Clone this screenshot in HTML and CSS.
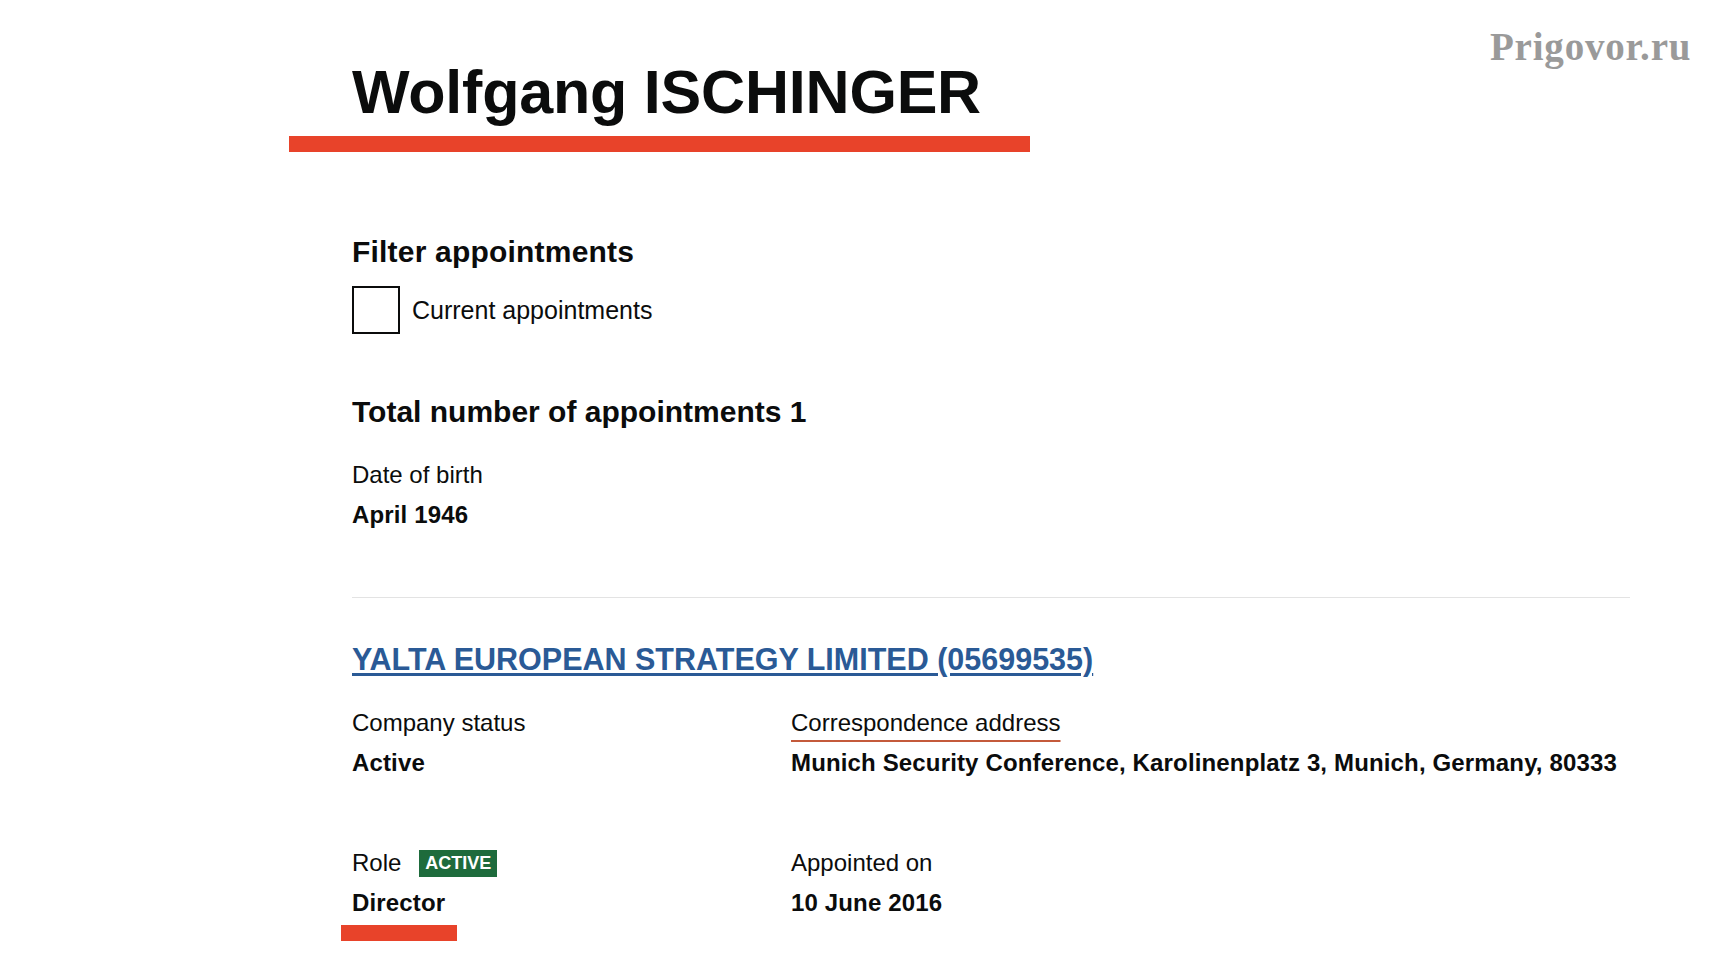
FILE: index.html
```html
<!DOCTYPE html>
<html lang="en">
<head>
<meta charset="utf-8">
<title>Wolfgang ISCHINGER</title>
<link rel="stylesheet" href="styles.css">
</head>
<body>
<div class="watermark">Prigovor.ru</div>
<header class="page-header">
  <h1 class="title">Wolfgang ISCHINGER</h1>
</header>
<main class="main">
  <h2 class="heading filter-heading">Filter appointments</h2>
  <label class="check">
    <span class="check-box"></span>
    <span class="check-label">Current appointments</span>
  </label>
  <h2 class="heading total-heading">Total number of appointments 1</h2>
  <div class="dob">
    <div class="label">Date of birth</div>
    <div class="value value-dob">April 1946</div>
  </div>
  <hr class="rule">
  <section class="appointment">
    <h2 class="heading link-heading"><a class="company-link" href="#">YALTA EUROPEAN STRATEGY LIMITED (05699535)</a></h2>
    <div class="grid">
      <div class="cell">
        <div class="label">Company status</div>
        <div class="value">Active</div>
      </div>
      <div class="cell">
        <div class="label"><span class="underlined">Correspondence address</span></div>
        <div class="value">Munich Security Conference, Karolinenplatz 3, Munich, Germany, 80333</div>
      </div>
      <div class="cell row2">
        <div class="label label-role">Role <span class="badge">ACTIVE</span></div>
        <div class="value">Director</div>
        <div class="marker"></div>
      </div>
      <div class="cell row2">
        <div class="label">Appointed on</div>
        <div class="value">10 June 2016</div>
      </div>
    </div>
  </section>
</main>
</body>
</html>
```
FILE: styles.css
```css
html, body {
  margin: 0;
  padding: 0;
  background: #ffffff;
}
body {
  font-family: "Liberation Sans", Arial, sans-serif;
  color: #0b0c0c;
  width: 1718px;
  height: 966px;
  overflow: hidden;
  position: relative;
}
.watermark {
  position: absolute;
  left: 1490px;
  top: 23px;
  font-family: "Liberation Serif", "Times New Roman", serif;
  font-weight: bold;
  font-size: 39px;
  line-height: 48px;
  color: #9a9a9a;
  letter-spacing: 0.8px;
}
.page-header {
  margin-left: 289px;
  width: 741px;
  padding-top: 56px;
  padding-bottom: 8px;
  border-bottom: 16px solid #e8432a;
}
.title {
  margin: 0 0 0 63px;
  font-size: 61px;
  line-height: 72px;
  font-weight: bold;
  letter-spacing: -0.2px;
}
.main {
  margin-left: 352px;
  width: 1278px;
}
.heading {
  margin: 0;
  font-size: 30px;
  line-height: 36px;
  font-weight: bold;
}
.filter-heading {
  padding-top: 82px;
  letter-spacing: 0.2px;
}
.check {
  display: flex;
  align-items: center;
  margin-top: 16px;
  height: 48px;
}
.check-box {
  width: 44px;
  height: 44px;
  border: 2px solid #0b0c0c;
  flex: none;
}
.check-label {
  margin-left: 12px;
  font-size: 25px;
  line-height: 48px;
}
.total-heading {
  margin-top: 60px;
}
.dob {
  margin-top: 30px;
}
.label {
  font-size: 24px;
  line-height: 30px;
}
.value {
  font-size: 24px;
  line-height: 30px;
  font-weight: bold;
  margin-top: 10px;
  letter-spacing: 0.15px;
}
.rule {
  margin: 67px 0 0 0;
  border: 0;
  border-top: 1px solid #e3e3e3;
  height: 0;
}
.link-heading {
  margin-top: 43px;
}
.company-link {
  color: #2a5a96;
  text-decoration: underline;
  text-decoration-thickness: 3px;
  text-underline-offset: 3px;
  font-size: 30.5px;
}
.grid {
  display: grid;
  grid-template-columns: 439px 1fr;
  margin-top: 30px;
}
.row2 {
  margin-top: 70px;
}
.underlined {
  text-decoration: underline;
  text-decoration-color: #c45a3b;
  text-decoration-thickness: 1.5px;
  text-underline-offset: 9px;
}
.label-role {
  display: flex;
  align-items: center;
}
.badge {
  display: inline-block;
  margin-left: 18px;
  background: #1e6b3c;
  color: #ffffff;
  font-weight: bold;
  font-size: 18px;
  line-height: 27px;
  padding: 0 6px;
  letter-spacing: 0;
}
.marker {
  width: 116px;
  height: 16px;
  background: #e8432a;
  margin-left: -11px;
  margin-top: 7px;
}
```
